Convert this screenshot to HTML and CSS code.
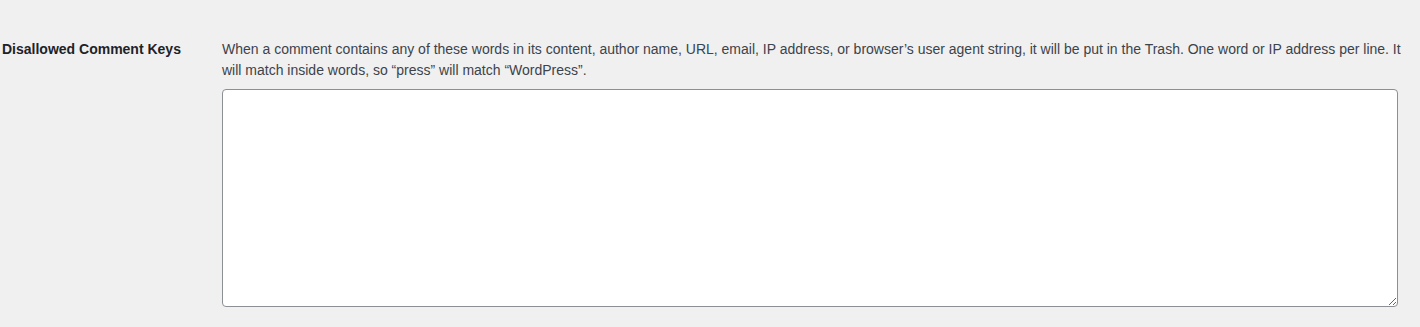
FILE: index.html
```html
<!DOCTYPE html>
<html lang="en">
<head>
<meta charset="utf-8">
<title>Discussion Settings</title>
<link rel="stylesheet" href="styles.css">
</head>
<body>
<div class="wrap">
  <div class="form-row">
    <div class="form-label">Disallowed Comment Keys</div>
    <div class="form-field">
      <p class="desc"><label for="disallowed_keys">When a comment contains any of these words in its content, author name, URL, email, IP address, or browser’s user agent string, it will be put in the Trash. One word or IP address per line. It will match inside words, so “press” will match “WordPress”.</label></p>
      <textarea id="disallowed_keys" class="large-text" rows="10" cols="50"></textarea>
    </div>
  </div>
</div>
</body>
</html>
```

FILE: styles.css
```css
html, body {
  margin: 0;
  padding: 0;
  background: #f0f0f1;
}
body {
  font-family: "Liberation Sans", Arial, sans-serif;
  font-size: 14px;
  color: #3c434a;
}
.wrap {
  padding: 20px 0 0 2px;
}
.form-row {
  display: flex;
}
.form-label {
  width: 200px;
  flex: none;
  padding: 20px 10px 20px 0;
  font-size: 14px;
  line-height: 1.3;
  font-weight: 700;
  color: #1d2327;
}
.form-field {
  flex: 1;
  min-width: 0;
  padding: 15px 10px;
}
.desc {
  margin: 4px 0 0;
  font-size: 14px;
  line-height: 1.5;
}
.large-text {
  display: block;
  box-sizing: border-box;
  width: 99%;
  height: 218px;
  margin: 8px 0 0;
  padding: 2px 6px;
  border: 1px solid #8c8f94;
  border-radius: 4px;
  background: #fff;
  color: #2c3338;
  font-family: "Liberation Mono", monospace;
  font-size: 14px;
  line-height: 1.5;
  resize: both;
}
```
